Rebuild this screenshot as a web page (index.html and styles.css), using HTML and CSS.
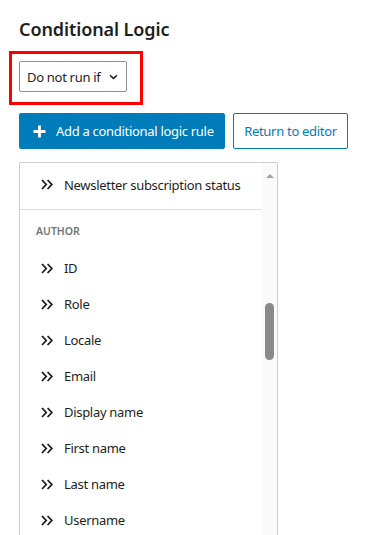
FILE: index.html
```html
<!DOCTYPE html>
<html>
<head>
<meta charset="utf-8">
<link rel="stylesheet" href="styles.css">
</head>
<body>
<div class="page">
  <h2 class="title">Conditional Logic</h2>
  <div class="select-wrap">
    <div class="select">
      <span>Do not run if</span>
      <svg class="caret" width="9" height="6" viewBox="0 0 9 6"><path d="M1 1.2 L4.5 4.4 L8 1.2" fill="none" stroke="#1e1e1e" stroke-width="1.5"/></svg>
    </div>
    <div class="highlight"></div>
  </div>
  <div class="actions">
    <button class="btn primary">
      <svg width="13" height="13" viewBox="0 0 13 13"><path d="M6.5 0.5 V12.5 M0.5 6.5 H12.5" stroke="#fff" stroke-width="2.8"/></svg>
      <span>Add a conditional logic rule</span>
    </button>
    <button class="btn secondary">Return to editor</button>
  </div>
  <div class="list">
    <div class="list-body">
      <div class="item first"><svg class="chev" width="12" height="11" viewBox="0 0 12 11"><path d="M1 1 L5.2 5.5 L1 10 M6.6 1 L10.8 5.5 L6.6 10" fill="none" stroke="#1e1e1e" stroke-width="1.8"/></svg><span>Newsletter subscription status</span></div>
      <div class="group">Author</div>
      <div class="item"><svg class="chev" width="12" height="11" viewBox="0 0 12 11"><path d="M1 1 L5.2 5.5 L1 10 M6.6 1 L10.8 5.5 L6.6 10" fill="none" stroke="#1e1e1e" stroke-width="1.8"/></svg><span>ID</span></div>
      <div class="item"><svg class="chev" width="12" height="11" viewBox="0 0 12 11"><path d="M1 1 L5.2 5.5 L1 10 M6.6 1 L10.8 5.5 L6.6 10" fill="none" stroke="#1e1e1e" stroke-width="1.8"/></svg><span>Role</span></div>
      <div class="item"><svg class="chev" width="12" height="11" viewBox="0 0 12 11"><path d="M1 1 L5.2 5.5 L1 10 M6.6 1 L10.8 5.5 L6.6 10" fill="none" stroke="#1e1e1e" stroke-width="1.8"/></svg><span>Locale</span></div>
      <div class="item"><svg class="chev" width="12" height="11" viewBox="0 0 12 11"><path d="M1 1 L5.2 5.5 L1 10 M6.6 1 L10.8 5.5 L6.6 10" fill="none" stroke="#1e1e1e" stroke-width="1.8"/></svg><span>Email</span></div>
      <div class="item"><svg class="chev" width="12" height="11" viewBox="0 0 12 11"><path d="M1 1 L5.2 5.5 L1 10 M6.6 1 L10.8 5.5 L6.6 10" fill="none" stroke="#1e1e1e" stroke-width="1.8"/></svg><span>Display name</span></div>
      <div class="item"><svg class="chev" width="12" height="11" viewBox="0 0 12 11"><path d="M1 1 L5.2 5.5 L1 10 M6.6 1 L10.8 5.5 L6.6 10" fill="none" stroke="#1e1e1e" stroke-width="1.8"/></svg><span>First name</span></div>
      <div class="item"><svg class="chev" width="12" height="11" viewBox="0 0 12 11"><path d="M1 1 L5.2 5.5 L1 10 M6.6 1 L10.8 5.5 L6.6 10" fill="none" stroke="#1e1e1e" stroke-width="1.8"/></svg><span>Last name</span></div>
      <div class="item"><svg class="chev" width="12" height="11" viewBox="0 0 12 11"><path d="M1 1 L5.2 5.5 L1 10 M6.6 1 L10.8 5.5 L6.6 10" fill="none" stroke="#1e1e1e" stroke-width="1.8"/></svg><span>Username</span></div>
    </div>
    <div class="scrollbar">
      <div class="arrow"></div>
      <div class="thumb"></div>
    </div>
  </div>
</div>
</body>
</html>
```
FILE: styles.css
```css
html, body {
  margin: 0;
  padding: 0;
  background: #fff;
  overflow: hidden;
}
body {
  font-family: "Noto Sans", "Open Sans", sans-serif;
  color: #1e1e1e;
  height: 535px;
}
.page {
  padding: 16px 0 0 19px;
}
.title {
  margin: 0;
  font-size: 18px;
  font-weight: 600;
  line-height: 26px;
  letter-spacing: -0.1px;
}
.select-wrap {
  position: relative;
  display: inline-block;
  margin-top: 19px;
}
.select {
  box-sizing: border-box;
  width: 108px;
  height: 31px;
  border: 1px solid #8c8f94;
  border-radius: 2px;
  display: flex;
  align-items: center;
  padding-left: 7px;
  font-size: 13px;
  letter-spacing: -0.3px;
}
.caret {
  margin-left: 9px;
}
.highlight {
  position: absolute;
  left: -10px;
  top: -10px;
  right: -16px;
  bottom: -13px;
  border: 3.5px solid #f00;
}
.actions {
  display: flex;
  gap: 8px;
  margin-top: 21px;
}
.btn {
  box-sizing: border-box;
  height: 36px;
  font-family: inherit;
  font-size: 13px;
  letter-spacing: -0.3px;
  border-radius: 2px;
  display: flex;
  align-items: center;
  cursor: pointer;
}
.primary {
  width: 206px;
  background: #007cba;
  border: 1px solid #007cba;
  color: #fff;
  padding: 0 0 0 13px;
  gap: 10px;
}
.secondary {
  width: 115px;
  background: #fff;
  border: 1px solid #007cba;
  color: #007cba;
  justify-content: center;
  padding: 0;
}
.list {
  box-sizing: border-box;
  margin-top: 13px;
  width: 259px;
  height: 373px;
  border: 1px solid #ccc;
  border-bottom: none;
  border-radius: 2px 2px 0 0;
  display: flex;
  overflow: hidden;
}
.list-body {
  flex: 1;
  overflow: hidden;
}
.item {
  height: 36px;
  display: flex;
  align-items: center;
  padding-left: 21px;
  font-size: 13px;
  letter-spacing: -0.3px;
}
.item.first {
  box-sizing: border-box;
  height: 47px;
  padding-bottom: 3px;
  border-bottom: 1px solid #ddd;
}
.chev {
  margin-right: 11px;
  flex: none;
}
.group {
  box-sizing: border-box;
  height: 40px;
  padding-left: 16px;
  padding-top: 2px;
  display: flex;
  align-items: center;
  font-size: 10.5px;
  font-weight: 600;
  color: #757575;
  text-transform: uppercase;
}
.scrollbar {
  width: 15px;
  background: #fafafa;
}
.arrow {
  width: 0;
  height: 0;
  margin: 11px auto 0;
  border-left: 4px solid transparent;
  border-right: 4px solid transparent;
  border-bottom: 4px solid #a3a3a3;
}
.thumb {
  width: 9px;
  height: 57px;
  margin: 125px auto 0;
  background: #8a8a8a;
  border-radius: 4.5px;
}
```
